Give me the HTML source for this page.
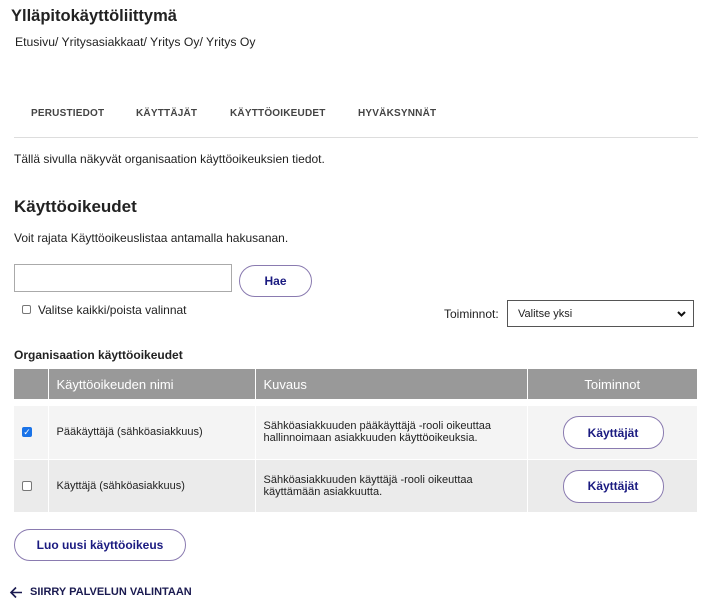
<!DOCTYPE html>
<html><head><meta charset="utf-8"><style>
*{box-sizing:border-box;margin:0;padding:0}
body{width:706px;height:602px;background:#fff;font-family:"Liberation Sans",Arial,sans-serif;color:#222;position:relative;overflow:hidden}
.a{position:absolute;white-space:nowrap}
.btn{position:absolute;border:1px solid #8a7bb0;border-radius:16px;background:#fff;color:#1a1a80;font-weight:bold;font-size:12px;display:flex;align-items:center;justify-content:center}
.tab{position:absolute;top:108px;font-size:10px;font-weight:bold;color:#444;letter-spacing:.2px}
table{position:absolute;left:14px;top:369px;width:684px;border-collapse:collapse;font-size:11px}
th{background:#999;color:#fff;font-weight:normal;font-size:13px;text-align:left;height:30px;padding-left:8px;border-right:1px solid #fff}
td{border-right:1px solid #fff;padding-left:8px;vertical-align:middle}
</style></head><body>
<div class="a" style="left:11px;top:7px;font-size:16.5px;font-weight:bold">Ylläpitokäyttöliittymä</div>
<div class="a" style="left:15px;top:35px;font-size:12.2px">Etusivu/ Yritysasiakkaat/ Yritys Oy/ Yritys Oy</div>
<div class="tab" style="left:31px">PERUSTIEDOT</div>
<div class="tab" style="left:136px">KÄYTTÄJÄT</div>
<div class="tab" style="left:230px">KÄYTTÖOIKEUDET</div>
<div class="tab" style="left:358px">HYVÄKSYNNÄT</div>
<div class="a" style="left:14px;top:137px;width:684px;height:1px;background:#ddd"></div>
<div class="a" style="left:14px;top:152px;font-size:12px">Tällä sivulla näkyvät organisaation käyttöoikeuksien tiedot.</div>
<div class="a" style="left:14px;top:197px;font-size:17px;font-weight:bold">Käyttöoikeudet</div>
<div class="a" style="left:14px;top:231px;font-size:12px">Voit rajata Käyttöoikeuslistaa antamalla hakusanan.</div>
<div class="a" style="left:14px;top:264px;width:218px;height:28px;border:1px solid #aaa"></div>
<div class="btn" style="left:239px;top:265px;width:73px;height:32px">Hae</div>
<div class="a" style="left:22px;top:305px;width:9px;height:9px;border:1px solid #777;border-radius:2px"></div>
<div class="a" style="left:38px;top:303px;font-size:12px">Valitse kaikki/poista valinnat</div>
<div class="a" style="left:444px;top:307px;font-size:12px">Toiminnot:</div>
<div class="a" style="left:507px;top:300px;width:187px;height:27px;border:1px solid #555;font-size:11px;padding:7px 0 0 10px">Valitse yksi<svg style="position:absolute;right:7px;top:10px" width="9" height="6" viewBox="0 0 9 6"><path d="M1 1 L4.5 4.5 L8 1" stroke="#111" stroke-width="2" fill="none"/></svg></div>
<div class="a" style="left:14px;top:348px;font-size:12px;font-weight:bold">Organisaation käyttöoikeudet</div>
<table>
<tr><th style="width:34px"></th><th style="width:207px">Käyttöoikeuden nimi</th><th style="width:272px">Kuvaus</th><th style="text-align:center;padding:0">Toiminnot</th></tr>
<tr><td colspan="4" style="height:7px;padding:0;border:0"></td></tr>
<tr style="background:#f4f4f4;height:53px"><td><div style="width:10px;height:10px;background:#1a73e8;border-radius:2px;color:#fff;font-size:9px;line-height:10px;text-align:center">✓</div></td><td>Pääkäyttäjä (sähköasiakkuus)</td><td>Sähköasiakkuuden pääkäyttäjä -rooli oikeuttaa<br>hallinnoimaan asiakkuuden käyttöoikeuksia.</td><td style="position:relative;padding:0"><div class="btn" style="left:35px;top:10px;width:101px;height:33px">Käyttäjät</div></td></tr>
<tr style="background:#ebebeb;height:53px;border-top:1px solid #fff"><td><div style="width:10px;height:10px;border:1px solid #777;border-radius:2px;background:#fff"></div></td><td>Käyttäjä (sähköasiakkuus)</td><td>Sähköasiakkuuden käyttäjä -rooli oikeuttaa<br>käyttämään asiakkuutta.</td><td style="position:relative;padding:0"><div class="btn" style="left:35px;top:10px;width:101px;height:33px">Käyttäjät</div></td></tr>
</table>
<div class="btn" style="left:14px;top:529px;width:172px;height:32px">Luo uusi käyttöoikeus</div>
<svg class="a" style="left:9px;top:586px" width="14" height="13" viewBox="0 0 14 13"><path d="M13 6.5 H2 M7 1.5 L2 6.5 L7 11.5" stroke="#1a1a50" stroke-width="1.6" fill="none"/></svg>
<div class="a" style="left:30px;top:586px;font-size:11px;font-weight:bold;color:#1a1a50">SIIRRY PALVELUN VALINTAAN</div>
</body></html>
